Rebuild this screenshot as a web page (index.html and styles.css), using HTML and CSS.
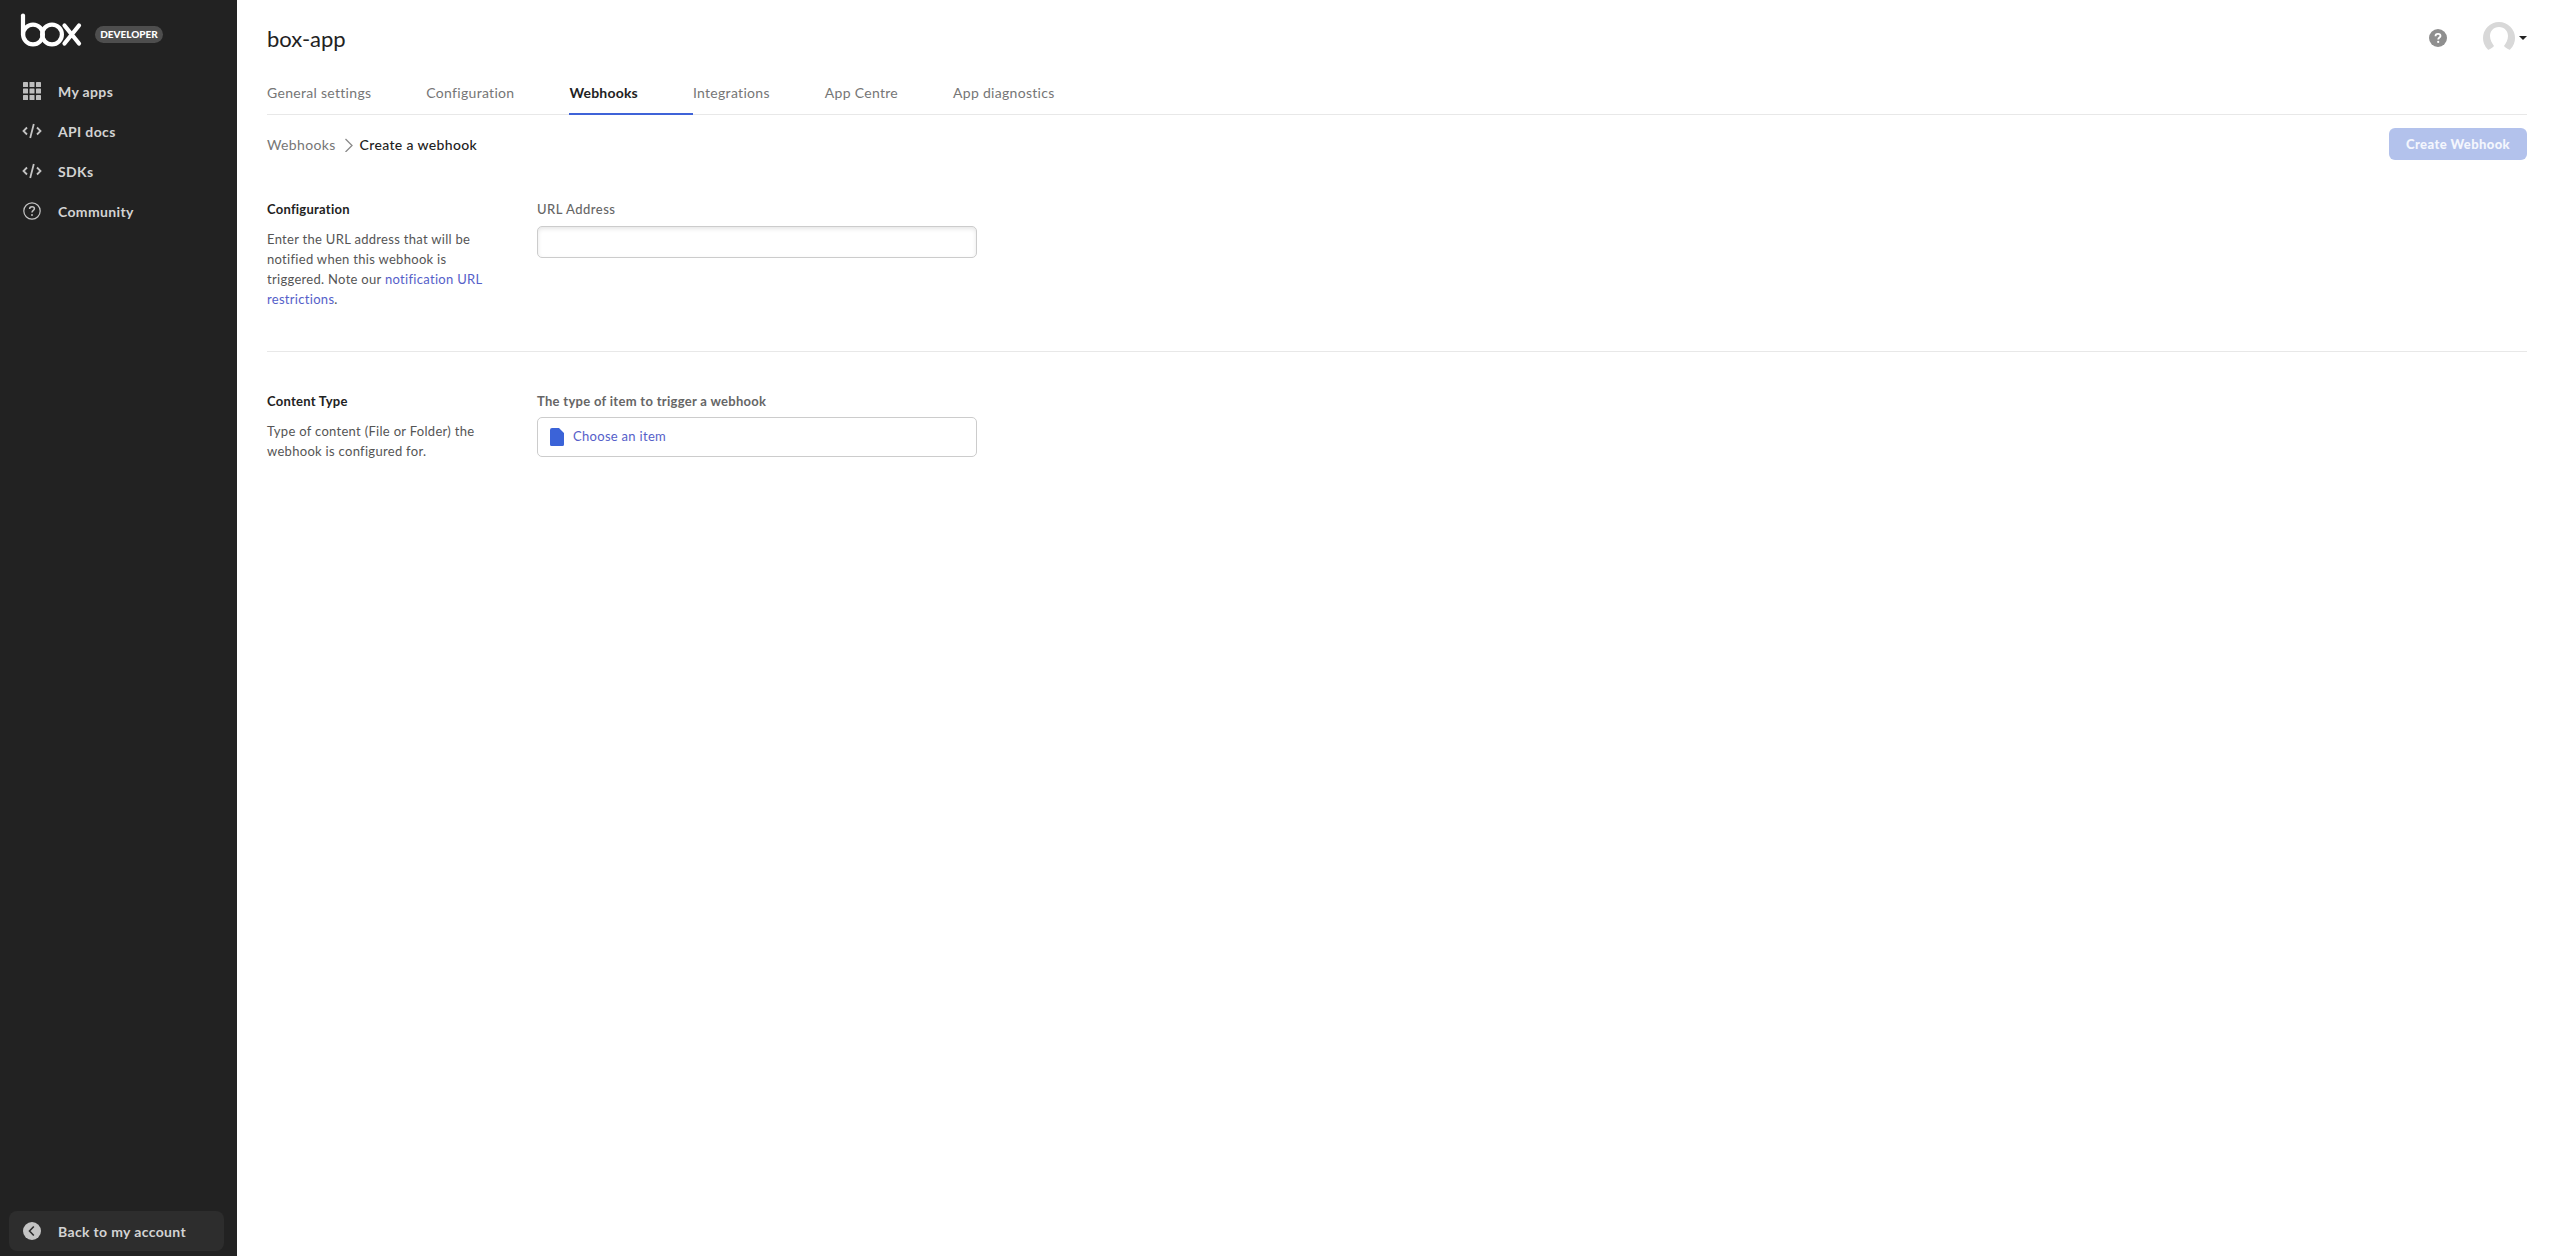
FILE: index.html
```html
<!DOCTYPE html>
<html lang="en">
<head>
<meta charset="utf-8">
<title>box-app</title>
<link rel="stylesheet" href="styles.css">
</head>
<body>
<div class="app">
  <aside class="sidebar">
    <div>
      <div class="brand">
        <svg class="logo" width="62" height="34" viewBox="0 0 62 34" fill="none" stroke="#fff" stroke-width="4.2" stroke-linecap="round">
          <path d="M3 2.500V21.500"/>
          <circle cx="13" cy="21.500" r="9.900"/>
          <circle cx="32" cy="21.500" r="9.900"/>
          <path d="M44.500 12.500L59 30.500M59 12.500L44.500 30.500"/>
        </svg>
        <span class="badge">DEVELOPER</span>
      </div>
      <nav class="nav">
        <a class="nav-item">
          <svg class="nav-icon" width="18" height="18" viewBox="0 0 18 18" fill="#bdbdbd">
            <rect x="0" y="0" width="5" height="5" rx=".6"/><rect x="6.500" y="0" width="5" height="5" rx=".6"/><rect x="13" y="0" width="5" height="5" rx=".6"/>
            <rect x="0" y="6.500" width="5" height="5" rx=".6"/><rect x="6.500" y="6.500" width="5" height="5" rx=".6"/><rect x="13" y="6.500" width="5" height="5" rx=".6"/>
            <rect x="0" y="13" width="5" height="5" rx=".6"/><rect x="6.500" y="13" width="5" height="5" rx=".6"/><rect x="13" y="13" width="5" height="5" rx=".6"/>
          </svg>
          <span>My apps</span>
        </a>
        <a class="nav-item">
          <svg class="nav-icon" width="20" height="18" viewBox="0 0 20 18" fill="none" stroke="#c4c4c4" stroke-width="1.800"><path d="M5 5.500L1.500 9L5 12.500M15 5.500L18.500 9L15 12.500M11.800 2L8.200 16"/></svg>
          <span>API docs</span>
        </a>
        <a class="nav-item">
          <svg class="nav-icon" width="20" height="18" viewBox="0 0 20 18" fill="none" stroke="#c4c4c4" stroke-width="1.800"><path d="M5 5.500L1.500 9L5 12.500M15 5.500L18.500 9L15 12.500M11.800 2L8.200 16"/></svg>
          <span>SDKs</span>
        </a>
        <a class="nav-item">
          <svg class="nav-icon" width="18" height="18" viewBox="0 0 18 18" fill="none" stroke="#c4c4c4" stroke-width="1.200"><circle cx="9" cy="9" r="8.200"/><path d="M6.600 7.100C6.600 5.600 7.700 4.700 9 4.700C10.400 4.700 11.400 5.600 11.400 6.800C11.400 8.400 9 8.500 9 10.600" stroke-width="1.500"/><circle cx="9" cy="13" r=".95" fill="#c4c4c4" stroke="none"/></svg>
          <span>Community</span>
        </a>
      </nav>
    </div>
    <a class="back">
      <svg class="nav-icon" width="18" height="18" viewBox="0 0 18 18"><circle cx="9" cy="9" r="9" fill="#c4c4c4"/><path d="M10.800 4.500L6.500 9L10.800 13.500" fill="none" stroke="#2d2d2d" stroke-width="1.600"/></svg>
      <span>Back to my account</span>
    </a>
  </aside>
  <main class="main">
    <header class="topbar">
      <h1 class="title">box-app</h1>
      <div class="top-actions">
        <svg class="help" width="18" height="18" viewBox="0 0 18 18"><circle cx="9" cy="9" r="9" fill="#8f8f8f"/><path d="M6.500 7.200C6.500 5.700 7.600 4.900 9 4.900C10.500 4.900 11.500 5.700 11.500 6.900C11.500 8.500 9.200 8.500 9.200 10.400" fill="none" stroke="#fff" stroke-width="1.800"/><circle cx="9.200" cy="12.900" r="1.100" fill="#fff"/></svg>
        <svg class="avatar" width="32" height="32" viewBox="0 0 32 32"><circle cx="16" cy="16" r="16" fill="#d8d8d8"/><path d="M16 5C21.500 5 25 9 25 14C25 18 23 21 21 24C22 25 24 27 27 28L32 32H0L5 28C8 27 10 25 11 24C9 21 7 18 7 14C7 9 10.500 5 16 5Z" fill="#fff"/></svg>
        <span class="caret"></span>
      </div>
    </header>
    <nav class="tabs">
      <a class="tab">General settings</a>
      <a class="tab">Configuration</a>
      <a class="tab tab-active">Webhooks</a>
      <a class="tab">Integrations</a>
      <a class="tab">App Centre</a>
      <a class="tab">App diagnostics</a>
    </nav>
    <div class="crumb-row">
      <div class="crumbs">
        <a class="crumb-link">Webhooks</a>
        <svg class="crumb-sep" width="10" height="14" viewBox="0 0 10 14" fill="none" stroke="#8a8a8a" stroke-width="1.300"><path d="M1.500 1L8 7.500L1.500 14"/></svg>
        <span class="crumb-current">Create a webhook</span>
      </div>
      <button class="primary" type="button" disabled>Create Webhook</button>
    </div>
    <section class="section section-first">
      <div class="intro">
        <h2 class="intro-title">Configuration</h2>
        <p class="intro-text">Enter the URL address that will be notified when this webhook is triggered. Note our <a class="link">notification URL restrictions</a>.</p>
      </div>
      <div class="field">
        <label class="field-label">URL Address</label>
        <input class="input" type="text">
      </div>
    </section>
    <section class="section">
      <div class="intro">
        <h2 class="intro-title">Content Type</h2>
        <p class="intro-text">Type of content (File or Folder) the webhook is configured for.</p>
      </div>
      <div class="field">
        <label class="field-label field-label-strong">The type of item to trigger a webhook</label>
        <div class="picker">
          <svg width="14" height="18" viewBox="0 0 14 18"><path d="M2 0H9L14 5V16.500A1.500 1.500 0 0 1 12.500 18H1.500A1.500 1.500 0 0 1 0 16.500V2A2 2 0 0 1 2 0Z" fill="#3b63d8"/></svg>
          <a class="link picker-link">Choose an item</a>
        </div>
      </div>
    </section>
  </main>
</div>
</body>
</html>
```
FILE: styles.css
```css
* { box-sizing: border-box; }
html, body { margin: 0; height: 100%; }
body {
  font-family: Lato, "Open Sans", sans-serif;
  font-size: 13px;
  color: #222;
  background: #fff;
  overflow: hidden;
}
.app { display: flex; height: 100vh; }

.sidebar {
  width: 237px;
  flex: none;
  background: #222;
  display: flex;
  flex-direction: column;
  justify-content: space-between;
  padding-bottom: 5px;
}
.brand {
  display: flex;
  align-items: flex-start;
  padding: 13px 0 0 20px;
  height: 71px;
}
.logo { display: block; }
.badge {
  margin: 13px 0 0 13px;
  width: 68px;
  height: 17px;
  line-height: 17px;
  border-radius: 9px;
  background: #4e4e4e;
  color: #fff;
  font-size: 10px;
  font-weight: 900;
  text-align: center;
}
.nav { display: flex; flex-direction: column; }
.nav-item {
  display: flex;
  align-items: center;
  height: 40px;
  padding-left: 23px;
  color: #d3d3d3;
  font-size: 14px;
  font-weight: 700;
  letter-spacing: .35px;
}
.nav-item span { margin-left: 17px; }
.nav-item svg[width="20"] { margin-left: -1px; }
.nav-item svg[width="20"] + span { margin-left: 16px; }
.nav-icon { flex: none; display: block; }
.back {
  display: flex;
  align-items: center;
  height: 40px;
  margin: 0 13px 0 9px;
  padding-left: 14px;
  border-radius: 8px;
  background: #2d2d2d;
  color: #d3d3d3;
  font-size: 14px;
  font-weight: 700;
  letter-spacing: .35px;
}
.back span { margin-left: 17px; }

.main { flex: 1; min-width: 0; padding: 0 29px 0 30px; }
.topbar {
  display: flex;
  align-items: center;
  justify-content: space-between;
  height: 76px;
}
.title { margin: 0; font-size: 22px; font-weight: 400; color: #222; }
.top-actions { display: flex; align-items: center; }
.help { display: block; margin-right: 36px; }
.avatar { display: block; }
.caret {
  margin-left: 4px;
  width: 0;
  height: 0;
  border-left: 4px solid transparent;
  border-right: 4px solid transparent;
  border-top: 4px solid #222;
}

.tabs {
  display: flex;
  height: 39px;
  border-bottom: 1px solid #e8e8e8;
}
.tab {
  padding: 7px 55px 0 0;
  height: 39px;
  line-height: 20px;
  font-size: 14px;
  letter-spacing: .3px;
  color: #767676;
}
.tab-active {
  color: #222;
  font-weight: 700;
  letter-spacing: .2px;
  border-bottom: 2px solid #3f63d8;
}

.crumb-row {
  display: flex;
  align-items: center;
  justify-content: space-between;
  margin-top: 13px;
  height: 33px;
}
.crumbs { display: flex; align-items: center; font-size: 14px; letter-spacing: .35px; margin-bottom: 1px; }
.crumb-link { color: #767676; }
.crumb-sep { margin: 2px 6px 0 8px; display: block; }
.crumb-current { color: #222; font-weight: 500; }
.primary {
  width: 138px;
  height: 32px;
  padding: 0;
  border: 0;
  border-radius: 6px;
  background: #b3c2ec;
  color: #f4f6fd;
  font: 900 13px Lato, sans-serif;
  letter-spacing: .4px;
  align-self: flex-start;
}

.section { display: flex; }
.section-first {
  margin-top: 38px;
  padding-bottom: 42px;
  margin-bottom: 39px;
  border-bottom: 1px solid #e8e8e8;
}
.intro { width: 270px; flex: none; }
.intro-title {
  margin: 0;
  font-size: 13px;
  line-height: 20px;
  font-weight: 700;
  letter-spacing: .25px;
  color: #222;
}
.intro-text {
  margin: 10px 0 0;
  width: 222px;
  font-size: 13px;
  line-height: 20px;
  letter-spacing: .3px;
  color: #555;
}
.link { color: #5560c9; }
.field { width: 440px; }
.field-label {
  display: block;
  font-size: 13px;
  line-height: 20px;
  font-weight: 500;
  letter-spacing: .5px;
  color: #666;
}
.field-label-strong { font-weight: 700; letter-spacing: .3px; }
.input {
  display: block;
  margin-top: 7px;
  width: 440px;
  height: 32px;
  border: 1px solid #ccc;
  border-radius: 5px;
  background: #fff;
  box-shadow: inset 0 2px 4px rgba(0,0,0,.1);
  outline: 0;
}
.picker {
  display: flex;
  align-items: center;
  gap: 9px;
  margin-top: 6px;
  height: 40px;
  padding-left: 12px;
  border: 1px solid #ccc;
  border-top-width: 1.500px;
  border-radius: 5px;
  font-size: 13px;
  letter-spacing: .3px;
}
.picker-link { margin-bottom: 2px; }
```
